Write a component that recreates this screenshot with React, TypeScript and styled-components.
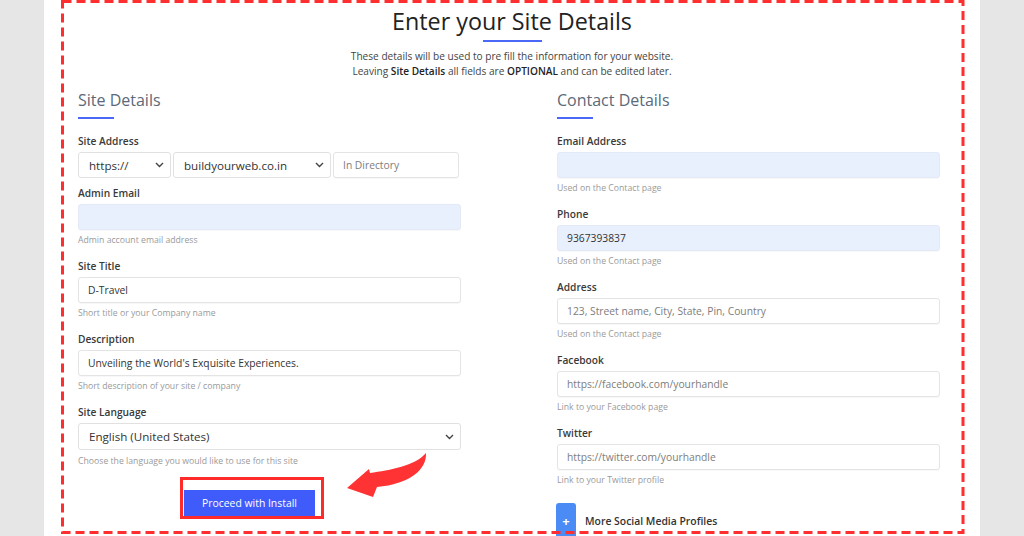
import React from 'react';
import styled, { createGlobalStyle } from 'styled-components';

const GlobalStyle = createGlobalStyle`
    html, body {
        margin: 0;
        padding: 0;
        background: #e6e6e6;
        font-family: 'Open Sans', 'Liberation Sans', sans-serif;
        color: #333;
    }
    * {
        box-sizing: border-box;
    }
`;

const Page = styled.div`
    position: relative;
    margin-left: 44px;
    width: 936px;
    height: 536px;
    background: #fff;
    overflow: hidden;
`;

const Header = styled.header`
    display: flex;
    flex-direction: column;
    align-items: center;
    padding-top: 5px;
`;

const Title = styled.h1`
    margin: 0;
    font-size: 23.3px;
    line-height: 32px;
    font-weight: 400;
    color: #222;
`;

const Underline = styled.div<{ $width: number; $top: number }>`
    width: ${(p) => p.$width}px;
    height: 2px;
    margin-top: ${(p) => p.$top}px;
    background: #4a67f5;
`;

const Intro = styled.p`
    margin: 7px 0 0;
    font-size: 10.1px;
    line-height: 15px;
    color: #444;
    text-align: center;
    b {
        font-weight: 600;
        color: #222;
    }
`;

const Columns = styled.div`
    display: grid;
    grid-template-columns: 383px 383px;
    column-gap: 96px;
    padding-left: 34px;
    margin-top: 10px;
`;

const Column = styled.section`
    display: flex;
    flex-direction: column;
`;

const SectionTitle = styled.h2`
    margin: 0;
    font-size: 16px;
    line-height: 22px;
    font-weight: 400;
    color: #5b6978;
`;

const SectionBar = styled.div`
    width: 36px;
    height: 2px;
    margin: 6px 0 15px;
    background: #4a67f5;
`;

const Field = styled.div<{ $gap?: number }>`
    display: flex;
    flex-direction: column;
    margin-bottom: ${(p) => p.$gap ?? 13}px;
`;

const Label = styled.label`
    font-size: 10.2px;
    line-height: 14px;
    font-weight: 600;
    color: #3a3a3a;
    margin-bottom: 4px;
`;

const Input = styled.div<{ $filled?: boolean; $placeholder?: boolean }>`
    height: 26px;
    width: 100%;
    display: flex;
    align-items: center;
    padding-left: 9px;
    border: 1px solid ${(p) => (p.$filled ? '#e3e9f7' : '#e4e4e4')};
    border-radius: 3px;
    background: ${(p) => (p.$filled ? '#e8f0fe' : '#fff')};
    font-size: 10.3px;
    color: ${(p) => (p.$placeholder ? '#7d7d7d' : '#333')};
    box-shadow: 0 1px 1px rgba(0, 0, 0, 0.03);
`;

const Select = styled.div<{ $tall?: boolean }>`
    height: ${(p) => (p.$tall ? 27 : 26)}px;
    display: flex;
    align-items: center;
    justify-content: space-between;
    padding: 0 6px 0 10px;
    border: 1px solid #e1e1e1;
    border-radius: 3px;
    background: #fff;
    font-size: 11.6px;
    color: #333;
`;

const AddressRow = styled.div`
    display: grid;
    grid-template-columns: 93px 158px 126px;
    column-gap: 2px;
    margin-bottom: 8px;
`;

const Help = styled.div<{ $top?: number }>`
    margin-top: ${(p) => p.$top ?? 4}px;
    font-size: 8.7px;
    line-height: 12px;
    color: #9a9a9a;
`;

const InstallFrame = styled.div`
    align-self: flex-start;
    margin: 10px 0 0 102px;
    padding: 10px 6px 0 1px;
    border: 3px solid #ff2b2b;
`;

const InstallButton = styled.button`
    display: block;
    width: 131px;
    height: 26px;
    border: none;
    background: #3f5cfb;
    color: #fff;
    font-family: inherit;
    font-size: 10.4px;
`;

const MoreRow = styled.div`
    display: flex;
    align-items: flex-start;
    gap: 9px;
    margin-top: 4px;
    margin-left: -1px;
`;

const PlusButton = styled.span`
    display: flex;
    align-items: flex-start;
    justify-content: center;
    width: 20px;
    height: 40px;
    padding-top: 9px;
    border-radius: 3px 3px 0 0;
    background: #4a8bf5;
    color: #fff;
    font-size: 13px;
    font-weight: 700;
    line-height: 18px;
`;

const MoreText = styled.span`
    margin-top: 11px;
    font-size: 10.4px;
    line-height: 15px;
    font-weight: 600;
    color: #333;
`;

const Overlay = styled.svg`
    position: absolute;
    left: 0;
    top: 0;
    pointer-events: none;
`;

const Arrow = styled.svg`
    position: absolute;
    left: 301px;
    top: 448px;
`;

const Chevron = () => (
    <svg width="9" height="6" viewBox="0 0 9 6">
        <polyline points="1,1 4.5,4.5 8,1" fill="none" stroke="#444" strokeWidth="1.4" />
    </svg>
);

type Item = { label: string; value?: string; placeholder?: string; filled?: boolean; help: string };

const site: Item[] = [
    { label: 'Admin Email', filled: true, help: 'Admin account email address' },
    { label: 'Site Title', value: 'D-Travel', help: 'Short title or your Company name' },
    { label: 'Description', value: "Unveiling the World's Exquisite Experiences.", help: 'Short description of your site / company' },
];

const contact: Item[] = [
    { label: 'Email Address', filled: true, help: 'Used on the Contact page' },
    { label: 'Phone', filled: true, value: '9367393837', help: 'Used on the Contact page' },
    { label: 'Address', placeholder: '123, Street name, City, State, Pin, Country', help: 'Used on the Contact page' },
    { label: 'Facebook', placeholder: 'https://facebook.com/yourhandle', help: 'Link to your Facebook page' },
    { label: 'Twitter', placeholder: 'https://twitter.com/yourhandle', help: 'Link to your Twitter profile' },
];

function TextField({ item }: { item: Item }) {
    return (
        <Field>
            <Label>{item.label}</Label>
            <Input $filled={item.filled} $placeholder={!!item.placeholder}>
                {item.value ?? item.placeholder ?? ''}
            </Input>
            <Help>{item.help}</Help>
        </Field>
    );
}

export default function App() {
    return (
        <>
            <GlobalStyle />
            <Page>
                <Header>
                    <Title>Enter your Site Details</Title>
                    <Underline $width={59} $top={3} />
                    <Intro>
                        These details will be used to pre fill the information for your website.
                        <br />
                        Leaving <b>Site Details</b> all fields are <b>OPTIONAL</b> and can be edited later.
                    </Intro>
                </Header>
                <Columns>
                    <Column>
                        <SectionTitle>Site Details</SectionTitle>
                        <SectionBar />
                        <Label>Site Address</Label>
                        <AddressRow>
                            <Select>
                                https://
                                <Chevron />
                            </Select>
                            <Select>
                                buildyourweb.co.in
                                <Chevron />
                            </Select>
                            <Input $placeholder>In Directory</Input>
                        </AddressRow>
                        {site.map((item) => (
                            <TextField key={item.label} item={item} />
                        ))}
                        <Field $gap={0}>
                            <Label>Site Language</Label>
                            <Select $tall>
                                English (United States)
                                <Chevron />
                            </Select>
                            <Help $top={5}>Choose the language you would like to use for this site</Help>
                        </Field>
                        <InstallFrame>
                            <InstallButton type="button">Proceed with Install</InstallButton>
                        </InstallFrame>
                    </Column>
                    <Column>
                        <SectionTitle>Contact Details</SectionTitle>
                        <SectionBar />
                        {contact.map((item) => (
                            <TextField key={item.label} item={item} />
                        ))}
                        <MoreRow>
                            <PlusButton>+</PlusButton>
                            <MoreText>More Social Media Profiles</MoreText>
                        </MoreRow>
                    </Column>
                </Columns>
                <Arrow width="90" height="56" viewBox="0 0 90 56">
                    <path
                        d="M2,40 L24,21 L25,25 C45,22 70,18 81,5 C82,22 64,36 32,39 L28,49 Z"
                        fill="#ff3333"
                    />
                </Arrow>
                <Overlay width="936" height="536">
                    <rect
                        x="18.5"
                        y="1.5"
                        width="900.5"
                        height="531"
                        fill="none"
                        stroke="#ff2f2f"
                        strokeWidth="3"
                        strokeDasharray="9 5"
                    />
                </Overlay>
            </Page>
        </>
    );
}
